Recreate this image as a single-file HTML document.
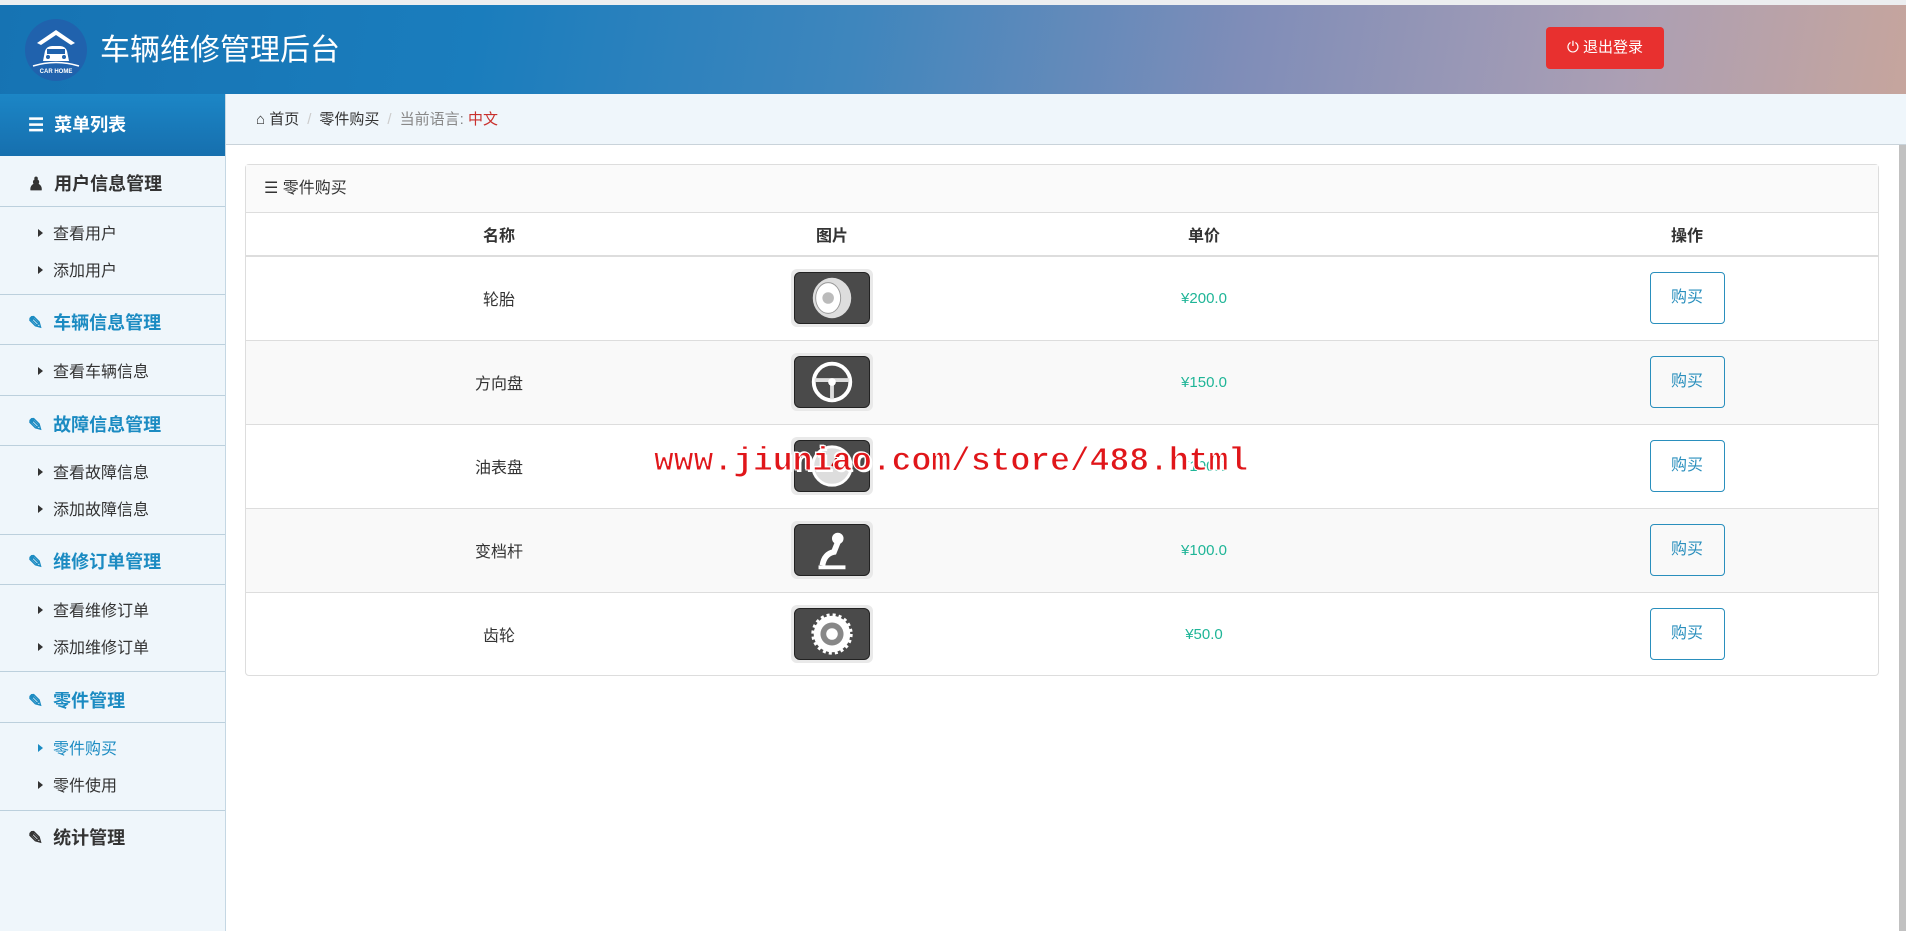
<!DOCTYPE html>
<html><head><meta charset="utf-8"><style>
*{margin:0;padding:0;box-sizing:border-box}
body{width:1906px;height:931px;overflow:hidden;background:#fff;font-family:"Liberation Sans","Noto Sans CJK SC",sans-serif;color:#333;position:relative}
.top{position:absolute;left:0;top:0;width:1906px;height:5px;background:#eceef0}
.hdr{position:absolute;left:0;top:5px;width:1906px;height:89px;background:linear-gradient(100deg,#1673b3 0%,#1a7dbd 25%,#3f86bd 45%,#7f8db8 65%,#ab9fb4 85%,#c6a59d 100%)}
.logo{position:absolute;left:25px;top:14px;width:62px;height:62px;border-radius:50%;background:#2062ad}
.ttl{position:absolute;left:100px;top:20px;color:#fff;font-size:30px}
.out{position:absolute;left:1546px;top:22px;width:118px;height:42px;background:#e8302f;border-radius:4px;color:#fff;font-size:15px;line-height:42px;text-align:center}
.side{position:absolute;left:0;top:94px;width:226px;height:837px;background:#eff6fb;border-right:1px solid #c5d7e3}
.sh{height:62px;background:linear-gradient(#1c86c6,#166fae);color:#fff;font-weight:bold;font-size:18px;line-height:62px;padding-left:28px}
.g{position:absolute;left:0;width:225px;font-weight:bold;font-size:18px;color:#1b8bc2;padding-left:28px}
.g.d{color:#333}
.ln{position:absolute;left:0;width:225px;height:1px;background:#bcd0dd}
.it{position:absolute;left:38px;font-size:16px;color:#333}
.it:before{content:"";display:inline-block;border-left:5px solid #333;border-top:4px solid transparent;border-bottom:4px solid transparent;margin-right:10px;vertical-align:2px}
.it.a{color:#1b8bc2}.it.a:before{border-left-color:#1b8bc2}
.bc{position:absolute;left:226px;top:94px;width:1680px;height:51px;background:#eff6fb;border-bottom:1px solid #c9d3da;font-size:15px;line-height:51px;padding-left:30px;color:#333}
.bc .s{color:#ccc;margin:0 8px}
.panel{position:absolute;left:245px;top:164px;width:1634px;height:512px;border:1px solid #ddd;border-radius:4px;background:#fff}
.ph{height:48px;background:#fafafa;border-bottom:1px solid #ddd;font-size:16px;line-height:48px;padding-left:18px}
table{border-collapse:collapse;width:100%}
th{height:43px;font-size:16px;border-bottom:2px solid #ddd;font-weight:bold;text-align:center}
td{height:84px;text-align:center;font-size:16px;border-top:1px solid #ddd}
tr.o td{background:#f9f9f9}
.pr{color:#1fb597;font-size:15px}
.btn{display:inline-block;width:75px;height:52px;border:1px solid #2a8fbd;border-radius:4px;color:#2a8fbd;line-height:50px;font-size:16px}
.im{display:inline-block;width:82px;height:58px;background:#e9e9e9;border-radius:6px;padding:3px;vertical-align:middle}
.im svg{display:block;width:76px;height:52px;background:#4a4a4a;border-radius:6px;border:1px solid #222}
.scr{position:absolute;left:1899px;top:145px;width:7px;height:786px;background:#c1c1c1}
.wm{position:absolute;left:654px;top:443px;font-family:"Liberation Mono",monospace;font-weight:bold;font-size:33px;color:#e0161a;-webkit-text-stroke:1px #fff;text-shadow:2px 2px 0 #fff,-1px -1px 0 #fff}
</style></head><body>
<div class="top"></div>
<div class="hdr">
<div class="logo"><svg width="62" height="62" viewBox="0 0 62 62"><path d="M12 24 L31 11 L50 24 L46 26 L31 16 L16 26Z" fill="#fff"/><path d="M18 42 L20 32 Q22 27 27 27 L35 27 Q40 27 42 32 L44 42 Z" fill="#fff"/><rect x="22" y="30" width="18" height="5" fill="#2062ad"/><circle cx="23" cy="38" r="2" fill="#2062ad"/><circle cx="39" cy="38" r="2" fill="#2062ad"/><path d="M8 47 Q31 40 54 47" stroke="#fff" stroke-width="1.5" fill="none"/><text x="31" y="54" font-size="6" fill="#fff" text-anchor="middle" font-weight="bold" font-family="Liberation Sans">CAR HOME</text></svg></div>
<div class="ttl">车辆维修管理后台</div>
<div class="out">⏻ 退出登录</div>
</div>
<div class="side">
<div class="sh">☰&nbsp; 菜单列表</div>
</div>
<div class="g d" style="top:170px">&#9823;&nbsp; 用户信息管理</div>
<div class="ln" style="top:206px"></div>
<div class="it" style="top:220px">查看用户</div>
<div class="it" style="top:257px">添加用户</div>
<div class="ln" style="top:294px"></div>
<div class="g" style="top:309px">✎&nbsp; 车辆信息管理</div>
<div class="ln" style="top:344px"></div>
<div class="it" style="top:358px">查看车辆信息</div>
<div class="ln" style="top:395px"></div>
<div class="g" style="top:411px">✎&nbsp; 故障信息管理</div>
<div class="ln" style="top:445px"></div>
<div class="it" style="top:459px">查看故障信息</div>
<div class="it" style="top:496px">添加故障信息</div>
<div class="ln" style="top:534px"></div>
<div class="g" style="top:548px">✎&nbsp; 维修订单管理</div>
<div class="ln" style="top:584px"></div>
<div class="it" style="top:597px">查看维修订单</div>
<div class="it" style="top:634px">添加维修订单</div>
<div class="ln" style="top:671px"></div>
<div class="g" style="top:687px">✎&nbsp; 零件管理</div>
<div class="ln" style="top:722px"></div>
<div class="it a" style="top:735px">零件购买</div>
<div class="it" style="top:772px">零件使用</div>
<div class="ln" style="top:810px"></div>
<div class="g d" style="top:824px">✎&nbsp; 统计管理</div>
<div class="bc">⌂ 首页<span class="s">/</span>零件购买<span class="s">/</span><span style="color:#888">当前语言:</span> <span style="color:#c9302c">中文</span></div>
<div class="panel">
<div class="ph">☰ 零件购买</div>
<table>
<tr><th style="width:506px">名称</th><th style="width:160px">图片</th><th style="width:584px">单价</th><th>操作</th></tr>
<tr><td>轮胎</td><td><span class="im"><svg viewBox="0 0 76 52"><ellipse cx="38" cy="26" rx="20" ry="21" fill="#ddd"/><ellipse cx="34" cy="26" rx="13" ry="16" fill="#fff" stroke="#999"/><circle cx="34" cy="26" r="6" fill="#bbb"/></svg></span></td><td class="pr">¥200.0</td><td><span class="btn">购买</span></td></tr>
<tr class="o"><td>方向盘</td><td><span class="im"><svg viewBox="0 0 76 52"><circle cx="38" cy="26" r="19" fill="none" stroke="#fff" stroke-width="4"/><path d="M20 24 L56 24 M38 26 L38 44" stroke="#ddd" stroke-width="4"/><circle cx="38" cy="26" r="4" fill="#fff"/></svg></span></td><td class="pr">¥150.0</td><td><span class="btn">购买</span></td></tr>
<tr><td>油表盘</td><td><span class="im"><svg viewBox="0 0 76 52"><circle cx="38" cy="26" r="20" fill="#ddd" stroke="#fff" stroke-width="3"/><path d="M38 26 L46 12" stroke="#c00" stroke-width="2"/></svg></span></td><td class="pr">¥100.0</td><td><span class="btn">购买</span></td></tr>
<tr class="o"><td>变档杆</td><td><span class="im"><svg viewBox="0 0 76 52"><path d="M28 42 Q30 30 40 28 L44 18" stroke="#fff" stroke-width="6" fill="none"/><circle cx="44" cy="14" r="6" fill="#fff"/><path d="M24 44 L52 44" stroke="#fff" stroke-width="4"/></svg></span></td><td class="pr">¥100.0</td><td><span class="btn">购买</span></td></tr>
<tr><td>齿轮</td><td><span class="im"><svg viewBox="0 0 76 52"><circle cx="38" cy="26" r="19" fill="#fff" stroke="#fff" stroke-width="5" stroke-dasharray="3 3"/><circle cx="38" cy="26" r="12" fill="#888"/><circle cx="38" cy="26" r="6" fill="#fff"/></svg></span></td><td class="pr">¥50.0</td><td><span class="btn">购买</span></td></tr>
</table>
</div>
<div class="scr"></div>
<div class="wm">www.jiuniao.com/store/488.html</div>
</body></html>
